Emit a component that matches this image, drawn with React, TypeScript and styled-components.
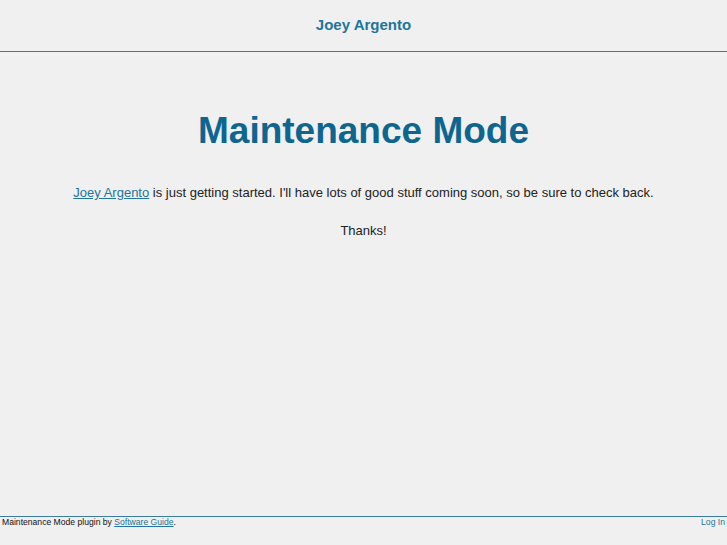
import React from "react";
import styled, { createGlobalStyle } from "styled-components";

const Global = createGlobalStyle`
  html, body { margin: 0; padding: 0; background: #f0f0f0; }
  body { font-family: "Liberation Sans", Arial, sans-serif; color: #222; }
`;

const Page = styled.div`
  min-height: 545px;
  display: flex;
  flex-direction: column;
`;

const Header = styled.header`
  height: 51px;
  border-bottom: 1px solid #3a7ca5;
  display: flex;
  align-items: center;
  justify-content: center;
`;

const SiteName = styled.a`
  font-size: 15px;
  font-weight: bold;
  color: #21759b;
  text-decoration: none;
  margin-top: -3px;
`;

const Main = styled.main`
  flex: 1;
  text-align: center;
  padding-top: 57px;
`;

const Title = styled.h1`
  margin: 0 0 32px;
  font-size: 37px;
  line-height: 44px;
  font-weight: bold;
  color: #0e6690;
`;

const Para = styled.p`
  margin: 0 0 23px;
  font-size: 13px;
  line-height: 15px;
  color: #222;
`;

const Link = styled.a`
  color: #21759b;
  text-decoration: underline;
`;

const Footer = styled.footer`
  border-top: 1px solid #3a7ca5;
  height: 28px;
  display: flex;
  justify-content: space-between;
  align-items: flex-start;
  padding: 0 2px;
  font-size: 8.6px;
  line-height: 11px;
  color: #111;
`;

const FooterText = styled.span``;

const FootLink = styled.a`
  color: #21759b;
  text-decoration: underline;
`;

const LoginLink = styled.a`
  color: #21759b;
  text-decoration: none;
`;

export default function App() {
  return (
    <Page>
      <Global />
      <Header>
        <SiteName href="#">Joey Argento</SiteName>
      </Header>
      <Main>
        <Title>Maintenance Mode</Title>
        <Para>
          <Link href="#">Joey Argento</Link> is just getting started. I'll have lots of good stuff coming soon, so be sure to check back.
        </Para>
        <Para>Thanks!</Para>
      </Main>
      <Footer>
        <FooterText>
          Maintenance Mode plugin by <FootLink href="#">Software Guide</FootLink>.
        </FooterText>
        <LoginLink href="#">Log In</LoginLink>
      </Footer>
    </Page>
  );
}
